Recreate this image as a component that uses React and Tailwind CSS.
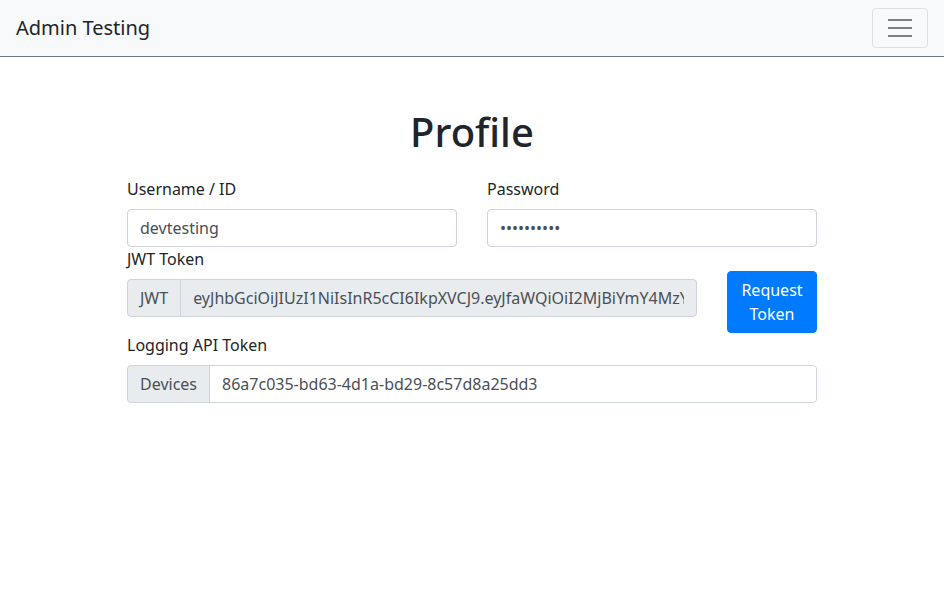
import React from "react";

const jwt =
  "eyJhbGciOiJIUzI1NiIsInR5cCI6IkpXVCJ9.eyJfaWQiOiI2MjBiYmY4MzY0ZjQ1ZTAwMTYxYjE2NzAiLCJpYXQiOjE2NDUwMjQ3ODB9.k3n9fQ2aXc";

function Navbar() {
  return (
    <nav className="flex items-center justify-between bg-[#f8f9fa] px-4 py-2 border-b border-[#6c757d]">
      <span className="text-[20px] leading-[30px] py-[5px] text-[#212529]">Admin Testing</span>
      <button
        type="button"
        className="w-[56px] h-[40px] flex items-center justify-center rounded border border-black/10"
      >
        <span className="flex flex-col gap-[6px]">
          <span className="block w-6 h-[2px] bg-[#7f7f7f]" />
          <span className="block w-6 h-[2px] bg-[#7f7f7f]" />
          <span className="block w-6 h-[2px] bg-[#7f7f7f]" />
        </span>
      </button>
    </nav>
  );
}

function Label({ children }) {
  return <label className="block mb-2 leading-6 text-[#212529]">{children}</label>;
}

const inputCls =
  "block w-full h-[38px] px-3 py-[6px] border border-[#ced4da] rounded text-[#495057] outline-none";

export default function App() {
  return (
    <div
      className="min-h-screen bg-white text-base"
      style={{ fontFamily: '"Noto Sans", sans-serif' }}
    >
      <Navbar />
      <div className="w-[690px] mx-auto">
        <h1 className="text-[40px] leading-[48px] font-medium text-center text-[#212529] mt-[51px] mb-[21px]">
          Profile
        </h1>
        <div className="grid grid-cols-2 gap-x-[30px]">
          <div>
            <Label>Username / ID</Label>
            <input className={inputCls} defaultValue="devtesting" readOnly />
          </div>
          <div>
            <Label>Password</Label>
            <input className={inputCls} type="password" defaultValue="devtesting" readOnly />
          </div>
        </div>
        <div className="flex gap-[30px]">
          <div className="w-[570px]">
            <Label>JWT Token</Label>
            <div className="flex h-[38px]">
              <span className="flex items-center px-3 bg-[#e9ecef] border border-[#ced4da] rounded-l text-[#495057]">
                JWT
              </span>
              <input
                className="flex-1 min-w-0 px-3 -ml-px bg-[#e9ecef] border border-[#ced4da] rounded-r text-[#495057] outline-none"
                defaultValue={jwt}
                readOnly
              />
            </div>
          </div>
          <div className="w-[90px] mt-6">
            <button
              type="button"
              className="w-full h-[62px] px-3 py-[6px] rounded bg-[#007bff] border border-[#007bff] text-white leading-6"
            >
              Request Token
            </button>
          </div>
        </div>
        <div>
          <Label>Logging API Token</Label>
          <div className="flex h-[38px]">
            <span className="flex items-center px-3 bg-[#e9ecef] border border-[#ced4da] rounded-l text-[#495057]">
              Devices
            </span>
            <input
              className="flex-1 min-w-0 px-3 -ml-px bg-white border border-[#ced4da] rounded-r text-[#495057] outline-none"
              defaultValue="86a7c035-bd63-4d1a-bd29-8c57d8a25dd3"
              readOnly
            />
          </div>
        </div>
      </div>
    </div>
  );
}
